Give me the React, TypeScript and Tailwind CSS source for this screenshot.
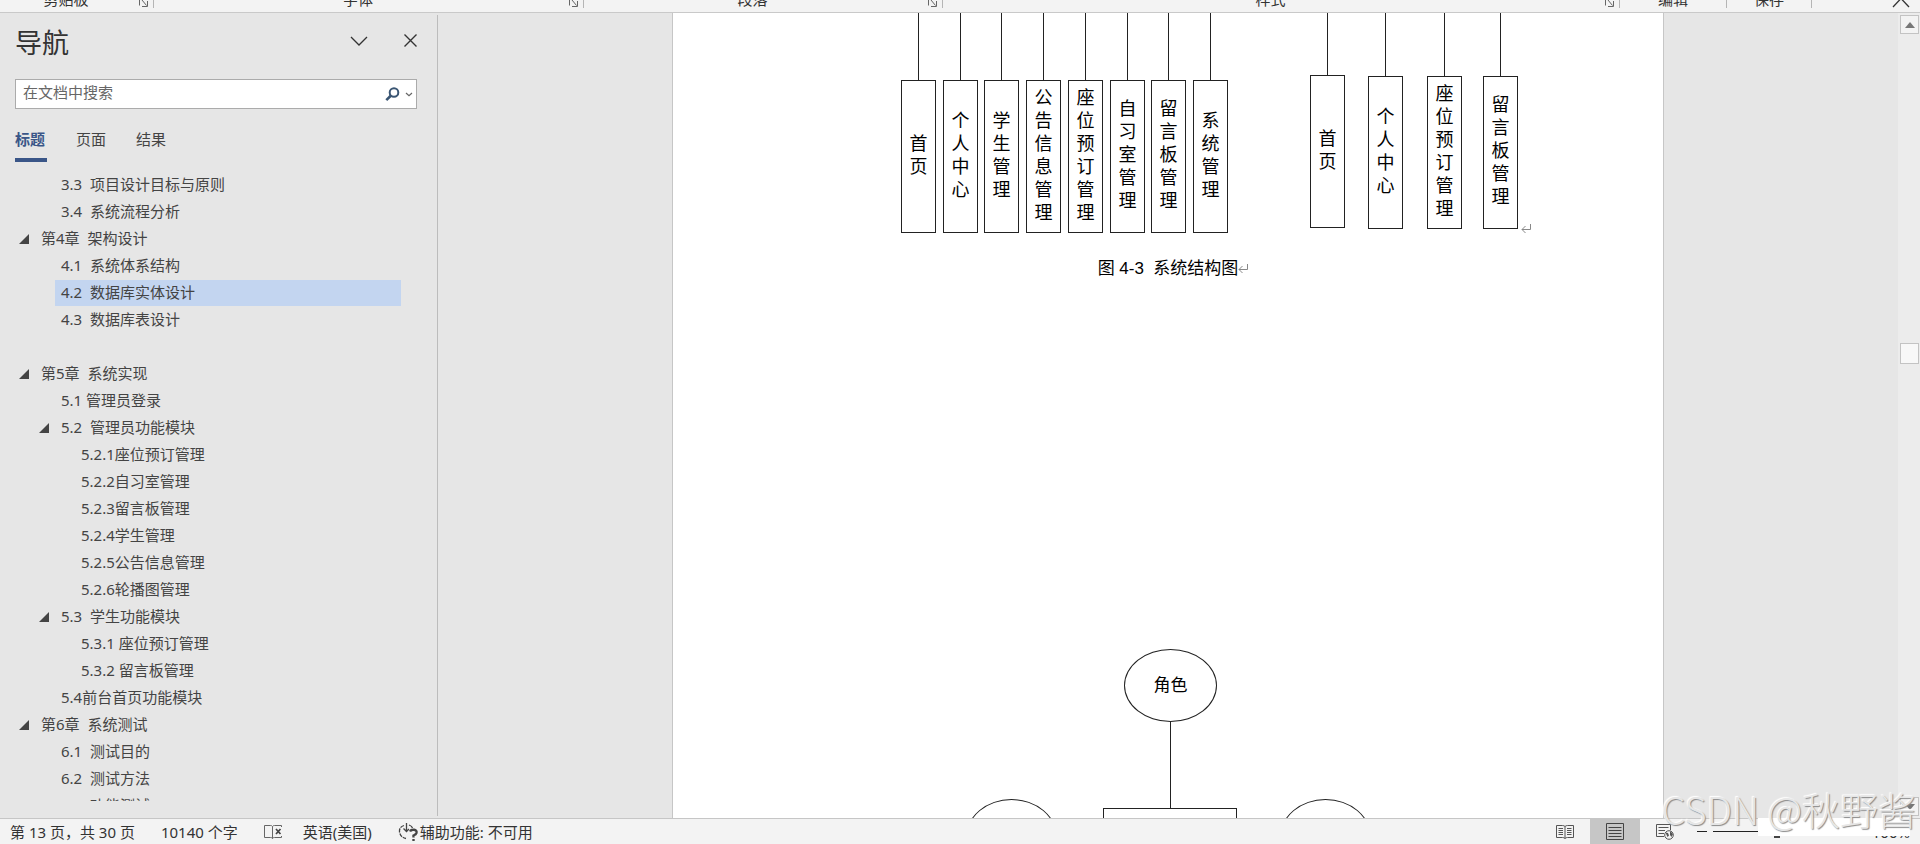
import { ReactNode } from "react";

const ribbonGroups = [
  { name: "剪贴板", width: "w-[154px]", launcher: true },
  { name: "字体", width: "w-[430px]", launcher: true },
  { name: "段落", width: "w-[359px]", launcher: true },
  { name: "样式", width: "w-[677px]", launcher: true },
  { name: "编辑", width: "w-[107px]", launcher: false },
  { name: "保存", width: "w-[85px]", launcher: false },
];

const headings = [
  { text: "3.3  项目设计目标与原则", level: 2 },
  { text: "3.4  系统流程分析", level: 2 },
  { text: "第4章  架构设计", level: 1, open: true },
  { text: "4.1  系统体系结构", level: 2 },
  { text: "4.2  数据库实体设计", level: 2, selected: true },
  { text: "4.3  数据库表设计", level: 2 },
  { text: "", level: 1 },
  { text: "第5章  系统实现", level: 1, open: true },
  { text: "5.1 管理员登录", level: 2 },
  { text: "5.2  管理员功能模块", level: 2, open: true },
  { text: "5.2.1座位预订管理", level: 3 },
  { text: "5.2.2自习室管理", level: 3 },
  { text: "5.2.3留言板管理", level: 3 },
  { text: "5.2.4学生管理", level: 3 },
  { text: "5.2.5公告信息管理", level: 3 },
  { text: "5.2.6轮播图管理", level: 3 },
  { text: "5.3  学生功能模块", level: 2, open: true },
  { text: "5.3.1 座位预订管理", level: 3 },
  { text: "5.3.2 留言板管理", level: 3 },
  { text: "5.4前台首页功能模块", level: 2 },
  { text: "第6章  系统测试", level: 1, open: true },
  { text: "6.1  测试目的", level: 2 },
  { text: "6.2  测试方法", level: 2 },
  { text: "6.3  功能测试", level: 2 },
];

const indent: Record<number, string> = {
  1: "ml-[14px]",
  2: "ml-[34px]",
  3: "ml-[54px]",
};

const adminModules = [
  { text: "首页", place: "left-[228px]" },
  { text: "个人中心", place: "left-[270px]" },
  { text: "学生管理", place: "left-[311px]" },
  { text: "公告信息管理", place: "left-[353px]" },
  { text: "座位预订管理", place: "left-[395px]" },
  { text: "自习室管理", place: "left-[437px]" },
  { text: "留言板管理", place: "left-[478px]" },
  { text: "系统管理", place: "left-[520px]" },
];

const studentModules = [
  { text: "首页", place: "left-[637px]", stem: "h-[62px]" },
  { text: "个人中心", place: "left-[695px]", stem: "h-[63px]" },
  { text: "座位预订管理", place: "left-[754px]", stem: "h-[63px]" },
  { text: "留言板管理", place: "left-[810px]", stem: "h-[63px]" },
];

const Ribbon = () => {
  return (
    <header className="flex h-[13px] shrink-0 overflow-hidden border-b border-[#c9c9c9] bg-[#f3f3f3] text-[15px] text-[#333]">
      {ribbonGroups.map((group) => (
        <div
          key={group.name}
          className={`flex shrink-0 items-end ${group.width}`}
        >
          <span className="flex-1 pb-[3px] text-center leading-5">
            {group.name}
          </span>
          {group.launcher && (
            <button
              aria-label={`${group.name}设置`}
              className="flex w-[21px] justify-end pr-[4px] pb-[4px]"
            >
              <svg width="11" height="9" viewBox="0 0 11 9" fill="none" stroke="#666">
                <path d="M1.500 0V6.500M4 1L8.500 6.500M9.500 2V7.500H4" />
              </svg>
            </button>
          )}
          <span className="mb-[4px] h-2 w-px bg-[#b5b5b5]" />
        </div>
      ))}
      <div className="flex flex-1 items-start justify-end pr-[10px]">
        <button aria-label="折叠功能区">
          <svg width="18" height="8" viewBox="0 0 18 8" fill="none" stroke="#333" strokeWidth="1.300">
            <path d="M1 7L9 -1.500L17 7" />
          </svg>
        </button>
      </div>
    </header>
  );
};

const Navigation = () => {
  return (
    <aside className="my-[2px] flex w-[438px] shrink-0 flex-col border-r border-[#bcbcbc] text-[15px] text-[#444]">
      <div className="flex h-[56px] items-center pr-[20px] pl-[15px]">
        <h1 className="flex-1 text-[27px] leading-8 text-[#333]">导航</h1>
        <button aria-label="任务窗格选项" className="mr-[36px] mb-[5px]">
          <svg width="18" height="10" viewBox="0 0 18 10" fill="none" stroke="#333" strokeWidth="1.300">
            <path d="M1 1L9 9L17 1" />
          </svg>
        </button>
        <button aria-label="关闭" className="mb-[5px]">
          <svg width="13" height="13" viewBox="0 0 13 13" fill="none" stroke="#333" strokeWidth="1.400">
            <path d="M.5 .5L12.500 12.500M12.500 .5L.5 12.500" />
          </svg>
        </button>
      </div>

      <div className="mt-[8px] mr-[20px] ml-[15px] flex h-[30px] items-center border border-[#ababab] bg-white">
        <input
          aria-label="在文档中搜索"
          placeholder="在文档中搜索"
          className="h-full min-w-0 flex-1 pb-[4px] pl-[7px] outline-none placeholder:text-[#666]"
        />
        <button aria-label="搜索">
          <svg width="15" height="15" viewBox="0 0 15 15" fill="none" stroke="#3a5573">
            <circle cx="9" cy="5.500" r="4.300" strokeWidth="2" />
            <path d="M6 8.500L1.300 13.200" strokeWidth="2.600" />
          </svg>
        </button>
        <button aria-label="搜索选项" className="pr-[3px] pl-[5px]">
          <svg width="8" height="5" viewBox="0 0 8 5" fill="none" stroke="#666" strokeWidth="1.200">
            <path d="M1 1L4 3.800L7 1" />
          </svg>
        </button>
      </div>

      <div className="mt-[16px] flex gap-[28px] pl-[15px] leading-7">
        <button className="w-8 border-b-4 border-[#3a5688] pb-[5px] text-left font-bold text-[#3a5688]">
          标题
        </button>
        <button className="w-8 border-b-4 border-transparent pb-[5px]">页面</button>
        <button className="w-8 border-b-4 border-transparent pb-[5px]">结果</button>
      </div>

      <nav className="mt-[10px] mb-[15px] min-h-0 flex-1 overflow-hidden pr-[36px]">
        {headings.map((item, i) => (
          <div key={i} className={`flex h-[27px] items-center ${indent[item.level]}`}>
            <span className="w-[21px] shrink-0 pb-[2px] pl-[5px]">
              {item.open && (
                <svg width="10" height="10" viewBox="0 0 10 10" fill="#444">
                  <path d="M0 10L10 0V10Z" />
                </svg>
              )}
            </span>
            {item.text && (
              <a
                href="#"
                className={`mb-px flex-1 pb-[2px] pl-[6px] leading-6 whitespace-pre ${
                  item.selected ? "bg-[#c3d5f0]" : ""
                }`}
              >
                {item.text}
              </a>
            )}
          </div>
        ))}
      </nav>
    </aside>
  );
};

const ReturnMark = () => {
  return (
    <svg width="11" height="10" viewBox="0 0 11 10" fill="none" stroke="#888">
      <path d="M9.500 0V5.500H1M4.500 2L1 5.500L4.500 9" />
    </svg>
  );
};

type ModuleProps = { text: string; place: string; stem: string };

const Module = ({ text, place, stem }: ModuleProps) => {
  return (
    <div className={`absolute top-0 flex flex-col items-center ${place}`}>
      <span className={`w-px bg-[#222] ${stem}`} />
      <div className="flex h-[153px] w-[35px] items-center justify-center border border-[#222]">
        <span className="w-[18px] pb-[4px] text-[18px] leading-[23px] break-all">
          {text}
        </span>
      </div>
    </div>
  );
};

const Page = () => {
  return (
    <article className="w-[992px] shrink-0 overflow-hidden border-x border-[#c6c6c6] bg-white text-black">
      {/* System structure */}
      <div className="relative h-[220px]">
        {adminModules.map((item) => (
          <Module key={item.place} {...item} stem="h-[67px]" />
        ))}
        {studentModules.map((item) => (
          <Module key={item.place} {...item} />
        ))}
        <span className="absolute top-[211px] left-[848px]">
          <ReturnMark />
        </span>
      </div>
      <p className="flex items-center justify-center pt-[25px] pl-[11px] font-['Liberation_Sans','Noto_Sans_CJK_SC',sans-serif] text-[17px] leading-[22px] whitespace-pre">
        图 4-3  系统结构图
        <ReturnMark />
      </p>

      {/* Role entity */}
      <div className="relative mt-[369px] h-[200px]">
        <div className="absolute top-0 left-[451px] flex h-[73px] w-[93px] items-center justify-center rounded-[50%] border border-[#222] pb-[2px] text-[17px]">
          角色
        </div>
        <span className="absolute top-[73px] left-[497px] h-[86px] w-px bg-[#222]" />
        <div className="absolute top-[159px] left-[430px] h-[60px] w-[134px] border border-[#222]" />
        <div className="absolute top-[150px] left-[293px] h-[76px] w-[91px] rounded-[50%] border border-[#222]" />
        <div className="absolute top-[150px] left-[607px] h-[76px] w-[91px] rounded-[50%] border border-[#222]" />
      </div>
    </article>
  );
};

const ScrollBar = () => {
  return (
    <div className="flex w-[22px] shrink-0 flex-col bg-[#ececec] py-[2px] pr-px pl-[2px]">
      <button
        aria-label="向上滚动"
        className="flex h-[19px] items-center justify-center border border-[#c3c3c3] bg-[#f3f3f3]"
      >
        <svg width="10" height="6" viewBox="0 0 10 6" fill="#777">
          <path d="M0 6L5 0L10 6Z" />
        </svg>
      </button>
      <div className="mt-[309px] h-[21px] border border-[#c3c3c3] bg-[#f8f8f8]" />
      <button
        aria-label="向下滚动"
        className="mt-auto flex h-[19px] items-center justify-center border border-[#c3c3c3] bg-[#f3f3f3]"
      >
        <svg width="10" height="6" viewBox="0 0 10 6" fill="#777">
          <path d="M0 0L5 6L10 0Z" />
        </svg>
      </button>
    </div>
  );
};

const ViewButton = ({
  label,
  active,
  children,
}: {
  label: string;
  active?: boolean;
  children: ReactNode;
}) => {
  return (
    <button
      aria-label={label}
      className={`flex h-full w-[50px] items-center justify-center ${
        active ? "bg-[#c6c6c6]" : ""
      }`}
    >
      {children}
    </button>
  );
};

const StatusBar = () => {
  return (
    <footer className="relative flex h-[26px] shrink-0 items-center border-t border-[#c6c6c6] bg-[#f3f3f3] pl-[10px] text-[15px] leading-6 text-[#333]">
      <button>第 13 页，共 30 页</button>
      <button className="ml-[26px]">10140 个字</button>
      <button aria-label="校对" className="ml-[26px]">
        <svg width="19" height="16" viewBox="0 0 19 16" fill="none" stroke="#666">
          <path d="M8.500 14.500V2.500C8 1.500 7 1.500 6 1.500H.5V13.500H6.500Q8 13.500 8.500 14.500Q9 13.500 10.500 13.500H17.500V12M8.500 2.500Q9 1.500 10.500 1.500H17.500V3" />
          <path d="M12 5L16.500 10M16.500 5L12 10" stroke="#444" strokeWidth="1.700" />
        </svg>
      </button>
      <button className="ml-[20px]">英语(美国)</button>
      <button className="ml-[26px] flex items-center">
        <svg width="22" height="20" viewBox="0 0 22 20" fill="none" stroke="#444">
          <path d="M6 3.500Q1 5 1.500 10Q2.500 15.500 8 16.500" strokeWidth="1.300" strokeDasharray="4 1" />
          <path d="M8.500 1V9M5.500 6.500L8.500 9.500L11 7M11 3Q14 4 14.500 6" strokeWidth="1.300" />
          <path d="M12 9.500Q13 7.500 16 7.800Q19 8.300 18.500 10.800Q18 12.500 15.500 13.500V15.500M15.500 17V19" strokeWidth="2.400" />
        </svg>
        辅助功能: 不可用
      </button>

      <div className="ml-auto flex h-full items-center">
        <ViewButton label="阅读视图">
          <svg width="18" height="16" viewBox="0 0 18 16" fill="none" stroke="#555">
            <path d="M9 14.500Q8 13.500 6.500 13.500H.5V1.500H6.500Q8 1.500 9 2.500Q10 1.500 11.500 1.500H17.500V13.500H11.500Q10 13.500 9 14.500V2.500" />
            <path d="M2.500 4.500H7M2.500 6.500H7M2.500 8.500H7M2.500 10.500H7M11 4.500H15.500M11 6.500H15.500M11 8.500H15.500M11 10.500H15.500" />
          </svg>
        </ViewButton>
        <ViewButton label="页面视图" active>
          <svg width="18" height="17" viewBox="0 0 18 17" fill="none" stroke="#444">
            <path d="M.5 .5H17.500V16.500H.5ZM2.500 4.500H15.500M2.500 7.500H15.500M2.500 10.500H15.500M2.500 13.500H15.500" />
          </svg>
        </ViewButton>
        <ViewButton label="Web 版式视图">
          <svg width="18" height="16" viewBox="0 0 18 16" fill="none" stroke="#555">
            <path d="M8 12.500H.5V.5H14.500V6M2.500 3.500H12.500M2.500 6.500H9M2.500 9.500H8" />
            <circle cx="13" cy="11" r="4.300" />
            <path d="M9.500 8.500L12 9L13 11.500L11.500 13ZM14 7L17 10L15.500 13L14 11Z" fill="#555" stroke="none" />
          </svg>
        </ViewButton>
        <button aria-label="缩小" className="ml-[7px] flex h-full w-[10px] items-center">
          <span className="h-px w-[10px] bg-[#222]" />
        </button>
        <input
          type="range"
          aria-label="显示比例"
          defaultValue={50}
          className="mx-[6px] h-3 w-[127px] appearance-none bg-[linear-gradient(#222,#222)] bg-[length:100%_1px] bg-center bg-no-repeat [&::-webkit-slider-thumb]:h-[13px] [&::-webkit-slider-thumb]:w-[6px] [&::-webkit-slider-thumb]:appearance-none [&::-webkit-slider-thumb]:bg-[#444]"
        />
        <button aria-label="放大" className="flex w-[9px] justify-center">
          <svg width="9" height="9" viewBox="0 0 9 9" stroke="#333">
            <path d="M0 4.500H9M4.500 0V9" />
          </svg>
        </button>
        <button className="w-[65px] pr-[10px] text-right">100%</button>
      </div>

      {/* Blank strip over the zoom controls */}
      <div className="absolute -top-px right-[10px] h-[18px] w-[152px] bg-white" />
      <span className="pointer-events-none absolute right-[4px] bottom-[11px] font-['Noto_Sans_CJK_SC',sans-serif] text-[38px] leading-[48px] font-light whitespace-pre text-[#e6e6e6] [text-shadow:1px_1px_1px_#8a8a8a,-1px_-1px_1px_#ffffff]">
        CSDN @秋野酱
      </span>
    </footer>
  );
};

const App = () => {
  return (
    <div className="flex h-screen flex-col overflow-hidden bg-[#e6e6e6] font-['Noto_Sans','Noto_Sans_CJK_SC',sans-serif]">
      <Ribbon />
      <div className="flex min-h-0 flex-1">
        <Navigation />
        <main className="flex min-w-0 flex-1 justify-center">
          <Page />
        </main>
        <ScrollBar />
      </div>
      <StatusBar />
    </div>
  );
};

export default App;
